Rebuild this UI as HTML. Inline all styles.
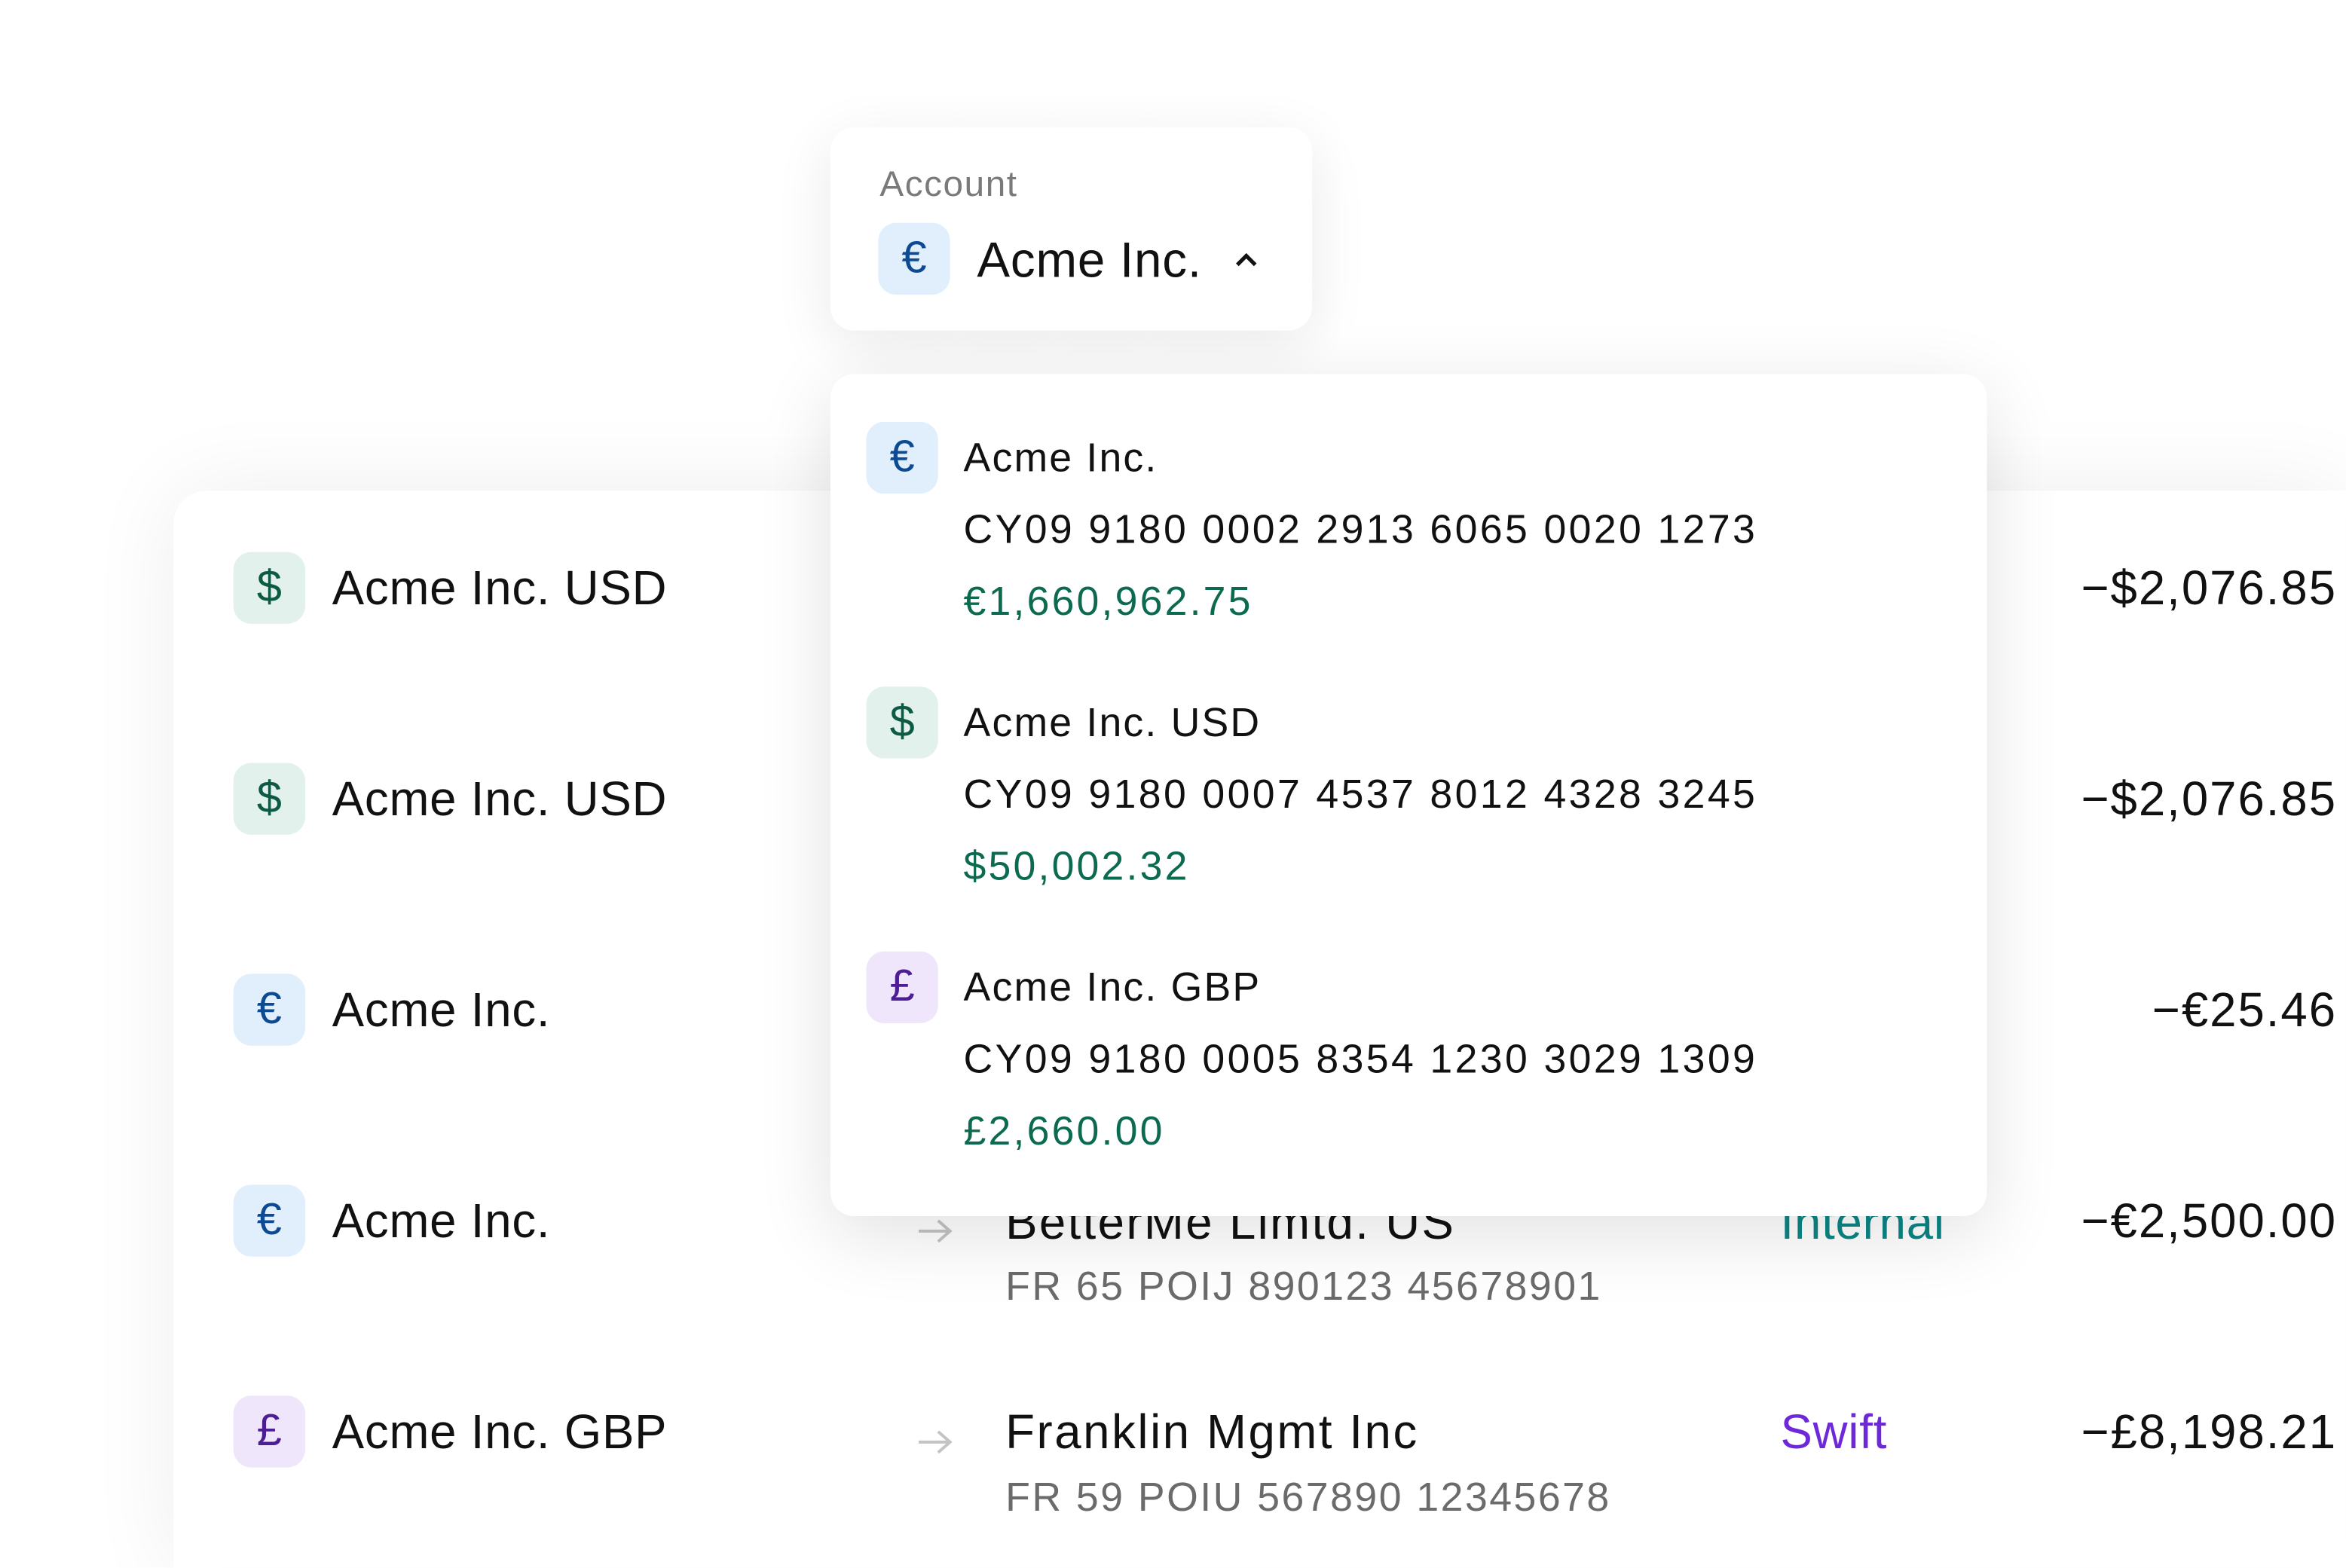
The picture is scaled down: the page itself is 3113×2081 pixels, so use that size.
<!DOCTYPE html>
<html><head><meta charset="utf-8">
<style>
html,body{margin:0;padding:0;background:#fff;overflow:hidden;width:3113px;height:2081px}
#w{position:absolute;left:0;top:0;width:1568px;height:1048px;overflow:hidden;transform:scale(1.9853);transform-origin:0 0;font-family:"Liberation Sans",sans-serif;color:#111}
.a{position:absolute;white-space:nowrap}
.card{position:absolute;background:#fff}
.ic{position:absolute;width:48px;height:48px;border-radius:12px;text-align:center;line-height:48px;font-size:30px;font-weight:500}
.eu{background:#e1eefc;color:#0c4a93}
.us{background:#e3f1ec;color:#0e5a45}
.gb{background:#efe6fb;color:#4c1d95}
.nm{font-size:32px;line-height:40px;letter-spacing:.4px}
.amt{font-size:32px;line-height:40px;right:6px;letter-spacing:1px}
.ib{font-size:27px;line-height:36px;color:#6b6b6b;letter-spacing:1.25px}
.arr{position:absolute;width:26px;height:20px}
.dn{font-size:27px;line-height:36px;letter-spacing:1.1px}
.dib{font-size:27px;line-height:36px;letter-spacing:1.7px}
.dg{font-size:27px;line-height:36px;color:#0b6a4f;letter-spacing:1.6px}
</style></head><body><div id="w">

<div class="card" style="left:116px;top:328px;width:1452px;height:720px;border-radius:22px 0 0 0;box-shadow:0 0 60px rgba(0,0,0,0.07)"></div>

<div class="ic us" style="left:156px;top:369px">$</div><div class="a nm" style="left:222px;top:373px">Acme Inc. USD</div><div class="a amt" style="top:373px">−$2,076.85</div>
<div class="ic us" style="left:156px;top:510px">$</div><div class="a nm" style="left:222px;top:514px">Acme Inc. USD</div><div class="a amt" style="top:514px">−$2,076.85</div>
<div class="ic eu" style="left:156px;top:651px">€</div><div class="a nm" style="left:222px;top:655px">Acme Inc.</div><div class="a amt" style="top:655px">−€25.46</div>
<div class="ic eu" style="left:156px;top:792px">€</div><div class="a nm" style="left:222px;top:796px">Acme Inc.</div><div class="a amt" style="top:796px">−€2,500.00</div>
<svg class="arr" style="left:612px;top:813px" viewBox="0 0 26 20"><path d="M2 10H23M15 3l8 7-8 7" fill="none" stroke="#c4c4c4" stroke-width="2"/></svg>
<div class="a nm" style="left:672px;top:797px;letter-spacing:1.2px">BetterMe Limtd. US</div>
<div class="a nm" style="left:1190px;top:797px;color:#0b8585">Internal</div>
<div class="a ib" style="left:672px;top:842px">FR 65 POIJ 890123 45678901</div>

<div class="ic gb" style="left:156px;top:933px">£</div><div class="a nm" style="left:222px;top:937px">Acme Inc. GBP</div><div class="a amt" style="top:937px">−£8,198.21</div>
<svg class="arr" style="left:612px;top:954px" viewBox="0 0 26 20"><path d="M2 10H23M15 3l8 7-8 7" fill="none" stroke="#c4c4c4" stroke-width="2"/></svg>
<div class="a nm" style="left:672px;top:937px;letter-spacing:1.3px">Franklin Mgmt Inc</div>
<div class="a nm" style="left:1190px;top:937px;color:#6d28d9">Swift</div>
<div class="a ib" style="left:672px;top:983px">FR 59 POIU 567890 12345678</div>

<div class="card" style="left:555px;top:85px;width:322px;height:136px;border-radius:16px;box-shadow:0 10px 40px rgba(0,0,0,0.09)"></div>
<div class="a" style="left:588px;top:110px;font-size:24px;line-height:28px;color:#7a7a7a;letter-spacing:.8px">Account</div>
<div class="ic eu" style="left:587px;top:149px">€</div>
<div class="a" style="left:653px;top:154px;font-size:33px;line-height:40px;letter-spacing:.4px">Acme Inc.</div>
<svg class="a" style="left:824px;top:166px" width="18" height="14" viewBox="0 0 18 14"><path d="M3 11l6-6 6 6" fill="none" stroke="#111" stroke-width="2.6"/></svg>

<div class="card" style="left:555px;top:250px;width:773px;height:563px;border-radius:16px;box-shadow:0 12px 50px rgba(0,0,0,0.12)"></div>
<div class="ic eu" style="left:579px;top:282px">€</div>
<div class="a dn" style="left:644px;top:288px">Acme Inc.</div>
<div class="a dib" style="left:644px;top:336px">CY09 9180 0002 2913 6065 0020 1273</div>
<div class="a dg" style="left:644px;top:384px">€1,660,962.75</div>

<div class="ic us" style="left:579px;top:459px">$</div>
<div class="a dn" style="left:644px;top:465px">Acme Inc. USD</div>
<div class="a dib" style="left:644px;top:513px">CY09 9180 0007 4537 8012 4328 3245</div>
<div class="a dg" style="left:644px;top:561px">$50,002.32</div>

<div class="ic gb" style="left:579px;top:636px">£</div>
<div class="a dn" style="left:644px;top:642px">Acme Inc. GBP</div>
<div class="a dib" style="left:644px;top:690px">CY09 9180 0005 8354 1230 3029 1309</div>
<div class="a dg" style="left:644px;top:738px">£2,660.00</div>

</div></body></html>
